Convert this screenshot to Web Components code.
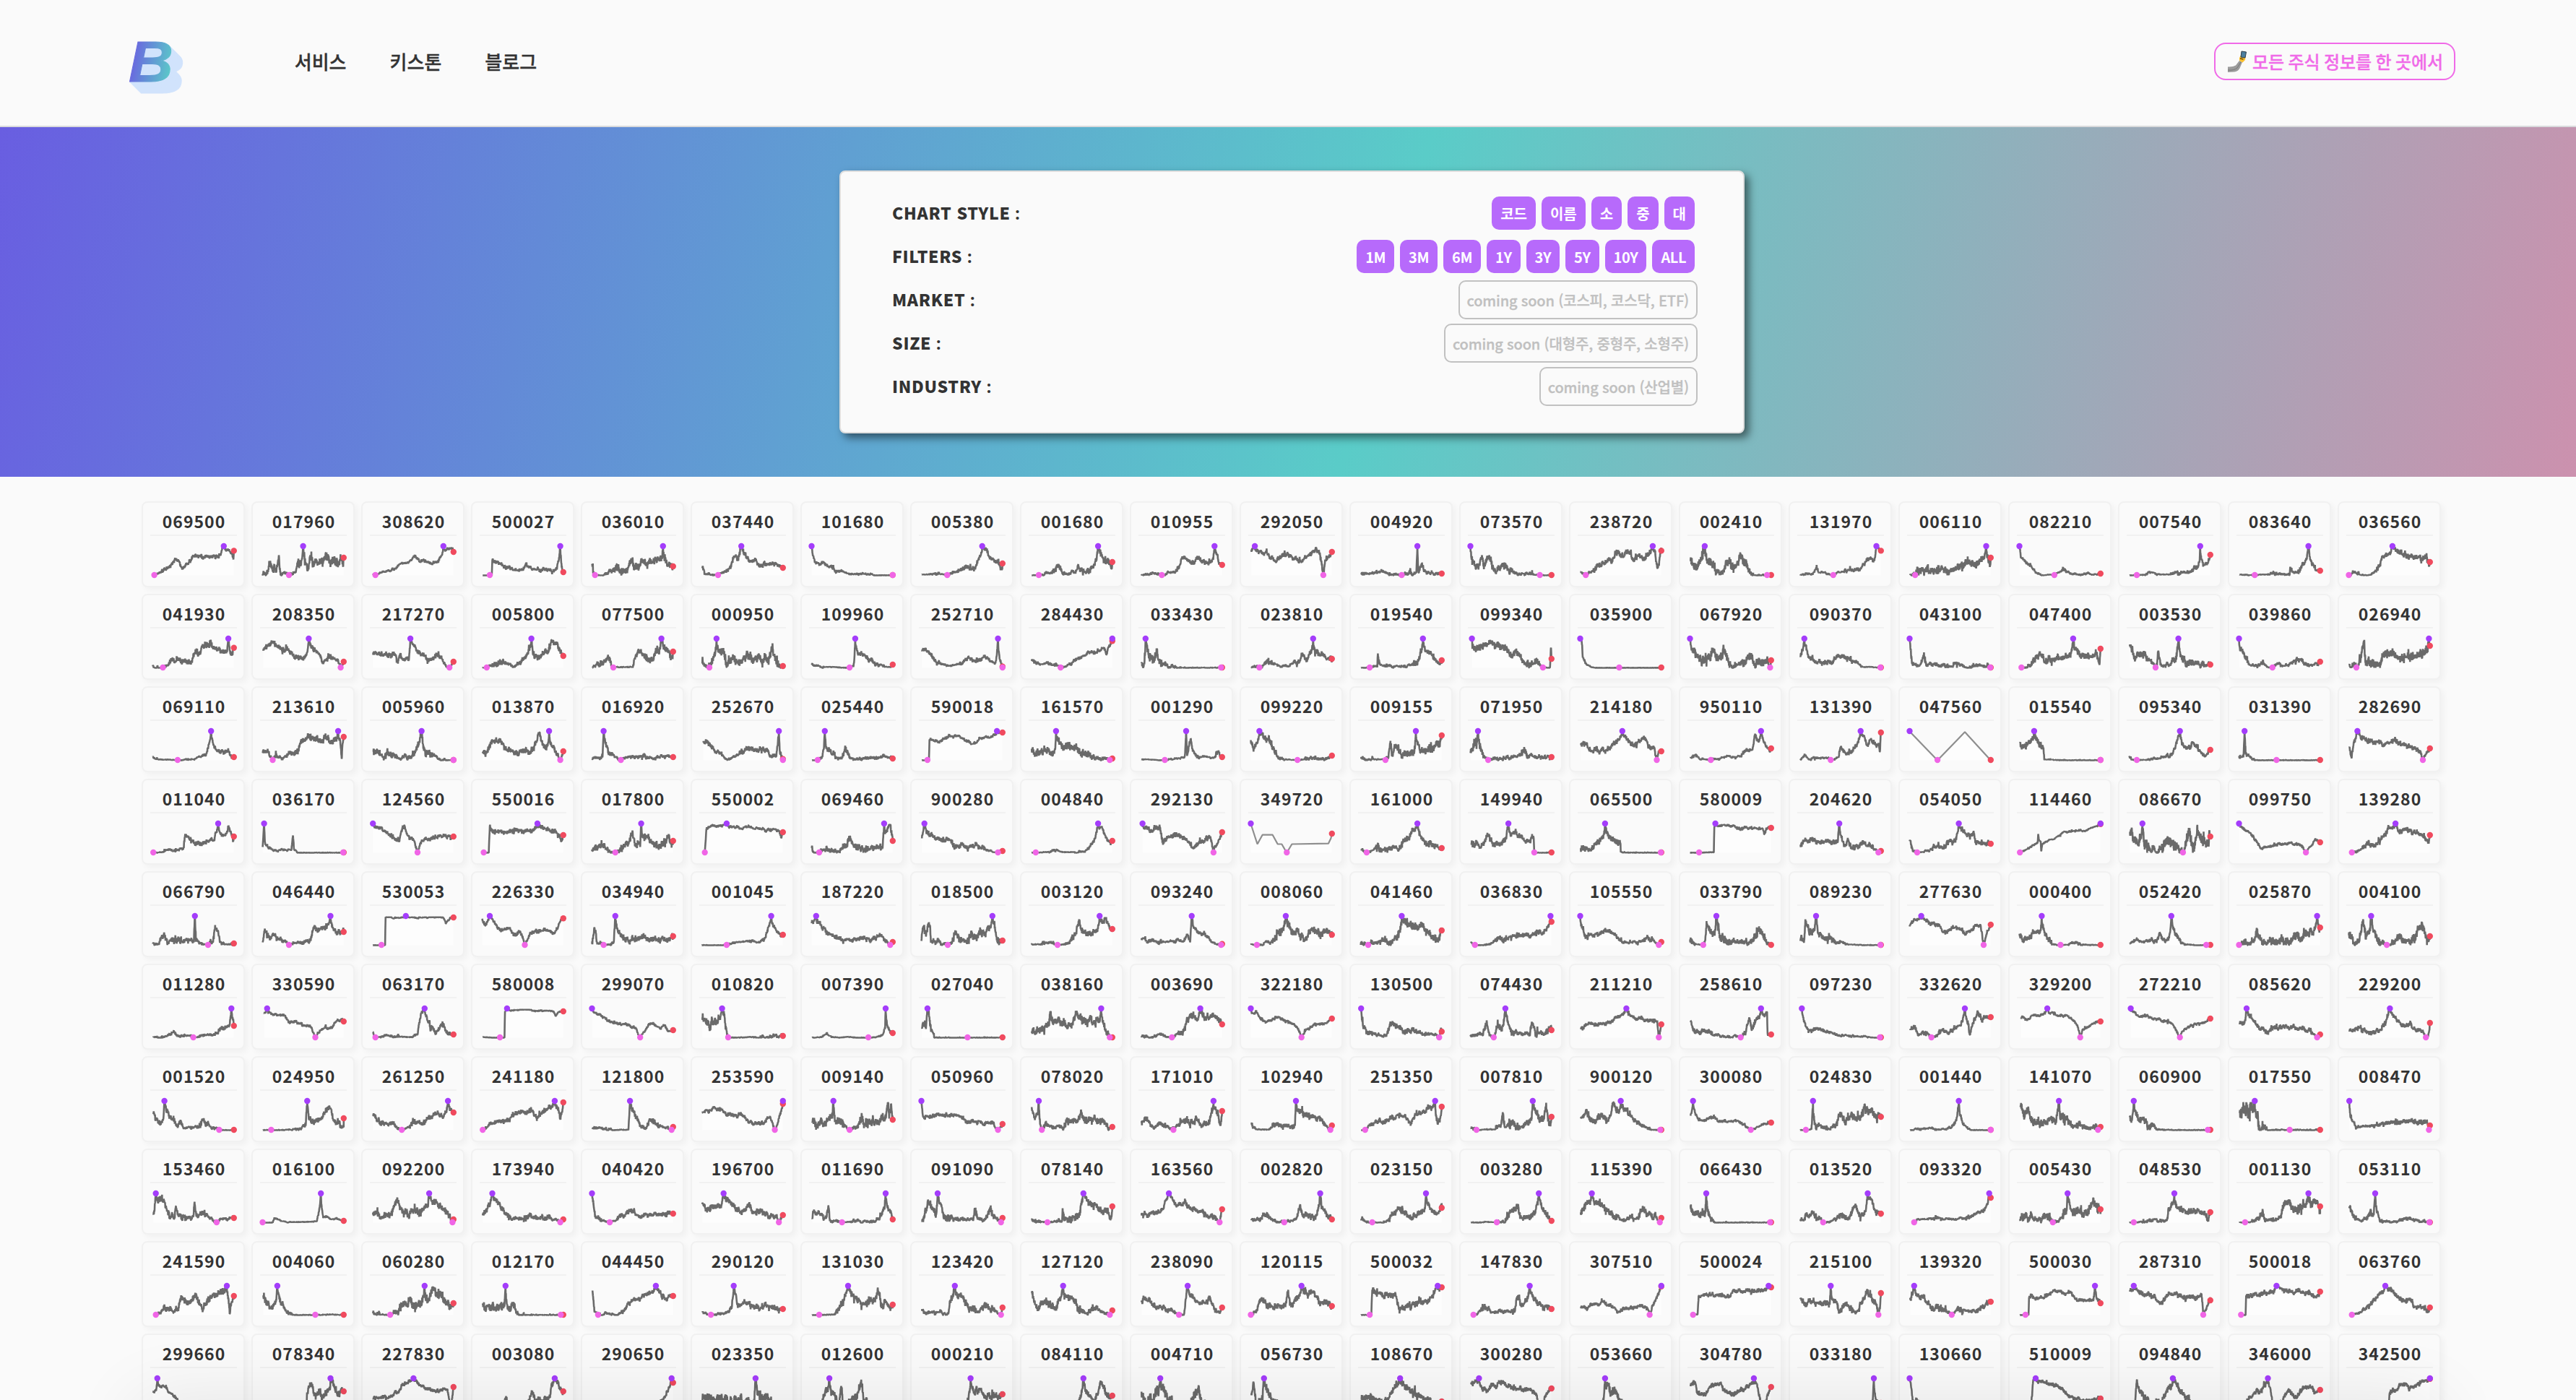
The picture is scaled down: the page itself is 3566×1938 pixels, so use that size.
<!DOCTYPE html>
<html lang="ko">
<head>
<meta charset="utf-8">
<title>Stocks</title>
<style>
html,body{margin:0;padding:0;background:#fafafa}
body{font-family:"Noto Sans CJK KR","Noto Sans",sans-serif;color:#333;height:1938px;overflow:hidden}
</style>
</head>
<body>
<stock-app></stock-app>
<script>
const define=(name,html,setup)=>customElements.define(name,class extends HTMLElement{
  connectedCallback(){
    if(this.shadowRoot)return;
    const t=document.createElement('template');
    t.innerHTML=html;
    this.attachShadow({mode:'open'}).appendChild(t.content.cloneNode(true));
    if(setup)setup.call(this,this.shadowRoot);
  }
});

/* code noise | high-x low-x last-height | x,height ... (x in 0..171, height in 0..100) */
const DATA=[`
069500 4|145 8 84|20,12 33,28 42,35 50,55 57,48 63,20 70,35 80,55 85,68 100,62 120,62 132,68 150,85 160,78 164,55
017960 9|85 57 60|5,5 15,20 18,50 24,20 32,10 37,70 40,15 50,8 70,10 78,35 83,55 88,50 95,20 99,70 105,40 115,45 125,55 140,45 155,40 162,55 164,30
308620 3|145 11 80|6,6 20,10 35,15 50,25 60,40 76,42 88,68 100,45 110,50 122,40 132,45 140,65 150,85 160,92
500027 4|159 20 10|6,0 24,0 25,52 35,45 45,32 60,22 75,18 87,22 92,40 97,25 110,20 145,18 152,22 157,60 163,15
036010 8|145 11 30|5,35 8,10 25,0 35,8 45,15 52,35 62,15 75,20 83,55 88,20 100,40 115,35 125,45 135,55 142,65 150,60 156,40
037440 5|83 37 25|6,30 12,5 30,3 45,5 55,15 62,25 68,60 72,70 75,50 80,70 88,70 100,50 115,40 130,32 142,35 150,42 158,28
101680 4|5 165 0|7,75 12,45 20,35 28,45 38,30 50,18 65,12 80,5 100,5 125,3 128,0
005380 5|125 56 40|6,3 20,3 35,6 45,4 62,8 75,12 85,20 95,28 105,20 112,30 118,60 124,80 132,95 140,55 150,52 160,40 164,22
001680 6|137 20 45|6,0 35,5 50,8 55,30 60,35 66,10 80,5 92,10 97,30 110,12 120,18 128,30 133,60 141,75 150,50 160,40 164,22
010955 5|150 46 35|6,0 15,5 35,5 55,5 70,12 80,25 86,60 100,50 110,40 116,65 125,50 138,35 147,60 155,75 160,40
292050 5|13 148 80|6,88 22,85 35,78 45,60 55,45 65,68 80,70 95,55 105,45 118,65 130,78 137,88 142,70 151,40 158,60
004920 6|117 86 5|6,8 15,5 28,10 48,10 60,3 75,5 100,5 103,25 107,5 115,10 119,10 127,35 130,12 140,8 155,5
073570 7|5 142 0|9,50 15,30 23,35 28,70 32,35 42,70 50,30 55,15 65,25 72,45 80,20 95,8 110,5 130,3
238720 6|148 16 84|6,12 30,15 40,35 50,40 60,50 70,60 76,85 85,65 98,80 110,60 120,70 130,60 140,75 152,85 157,25 160,40
002410 10|34 157 0|6,50 10,40 20,30 30,55 40,50 50,30 60,10 70,10 82,45 90,30 100,45 104,80 110,60 120,20 130,0
131970 4|156 71 84|6,3 20,5 30,5 39,25 45,10 60,5 80,10 90,12 100,20 112,20 125,25 135,50 145,62 150,45
006110 8|156 16 60|6,5 20,30 25,15 45,18 60,15 75,30 80,15 90,12 103,30 110,25 120,45 130,35 140,40 150,55 158,60 164,35
082210 4|5 74 5|8,60 20,45 30,25 40,10 50,0 65,3 80,8 93,20 105,5 120,3 140,6 155,4
007540 5|145 20 70|6,0 35,2 50,10 65,3 85,3 100,15 115,10 130,15 140,30 144,55 150,45 160,40 164,60
083640 5|142 36 15|6,3 50,3 60,3 80,6 105,3 106,30 110,10 120,12 128,25 135,45 139,60 145,60 150,45 157,20
036560 6|91 5 45|15,8 25,3 40,0 50,3 60,15 66,40 70,60 85,72 98,85 110,75 125,68 140,60 155,58 162,50`,`
041930 6|154 25 68|5,5 15,0 35,8 40,25 55,25 68,20 80,20 88,50 97,45 105,80 118,85 125,65 140,60 150,50 157,60 162,45
208350 5|96 159 20|6,62 15,75 24,88 35,70 48,58 53,68 60,50 70,42 85,35 92,50 99,75 110,60 120,40 126,20 135,35 148,30 158,15
217270 5|80 157 20|6,45 10,52 20,42 35,42 50,42 55,20 60,50 65,25 77,25 79,65 90,70 100,50 112,35 120,30 132,45 140,40 147,15
005800 6|102 14 40|6,0 20,10 35,18 45,22 55,12 70,8 80,15 90,30 98,60 105,45 115,45 125,50 135,50 141,88 150,80 160,60
077500 7|142 47 55|6,0 15,15 30,25 40,25 50,3 70,2 85,3 92,40 97,65 105,50 115,25 125,30 132,50 145,75 155,60 164,30
000950 9|34 20 5|6,15 10,5 26,25 32,60 40,65 48,50 53,15 60,35 72,15 85,25 95,45 105,20 115,35 125,30 136,20 142,60 150,30 158,15
109960 5|91 80 10|5,10 15,10 30,3 50,3 70,0 87,5 92,80 98,45 110,45 120,22 135,18 148,3 160,3
252710 4|156 165 3|6,60 12,65 25,40 35,20 45,15 55,5 70,10 85,15 98,40 110,25 122,22 130,45 140,20 150,15 160,30
284430 4|165 63 92|6,30 20,12 40,15 55,15 75,8 90,25 105,40 120,50 135,50 147,70 153,45 158,75
033430 9|14 163 0|6,20 10,5 17,80 22,30 28,15 36,50 42,20 52,8 60,4 75,0 150,0
023810 6|128 22 30|6,0 12,8 30,8 37,25 50,10 65,5 80,8 90,15 100,20 107,50 115,25 125,60 133,50 145,50 155,32
019540 5|128 23 25|6,0 30,5 38,5 39,50 42,12 60,5 75,5 95,5 105,12 118,20 124,60 135,60 145,45 155,20 160,12
099340 7|8 148 30|15,60 25,75 35,88 50,85 60,70 75,60 85,35 95,55 105,30 115,15 130,15 140,15 155,0 162,0 164,70
035900 3|5 82 0|8,90 10,35 15,15 25,3 35,0 100,0 150,0
067920 9|5 163 25|8,60 20,40 30,30 45,25 52,60 55,35 68,30 71,80 78,25 90,5 105,15 115,15 119,45 130,15 145,20 158,15
090370 5|14 164 0|6,40 11,60 18,60 22,40 35,20 55,20 70,25 82,45 90,35 100,35 115,15 130,3 145,3
043100 7|5 164 0|7,60 10,15 25,8 32,45 38,15 50,10 70,5 85,5 95,15 108,12 120,3 138,12 150,5
047400 7|111 9 65|20,5 35,20 45,50 55,25 70,30 80,30 95,38 105,45 120,45 135,45 145,40 152,40 156,50 160,30 163,10
003530 8|102 57 10|6,75 15,40 25,50 35,40 50,15 62,55 68,12 85,8 95,30 105,55 112,30 120,25 135,12 150,15
039860 6|5 71 20|10,60 16,35 24,10 40,5 50,20 60,3 80,10 95,8 110,12 122,30 135,10 150,10 160,15
026940 9|163 20 75|6,10 15,10 28,20 35,85 38,25 50,15 65,18 78,50 90,40 105,35 120,35 135,40 145,50 158,60`,`
069110 4|120 54 10|5,12 15,3 40,2 60,0 85,5 100,12 110,20 115,55 125,55 130,35 145,25 155,28 160,12
213610 6|154 25 80|5,25 15,40 30,15 45,8 60,20 75,35 80,60 90,80 100,80 110,80 118,65 130,75 140,60 150,75 158,70 161,5 163,60
005960 7|102 165 0|7,30 20,15 35,25 50,10 60,5 70,15 80,12 90,30 95,65 105,55 110,25 120,20 135,5 150,0
013870 6|137 159 30|6,30 12,25 22,60 30,65 45,55 60,35 75,25 90,25 105,35 112,60 117,90 125,50 133,45 141,60 150,30
016920 6|28 62 10|5,5 15,10 20,8 26,15 32,55 38,20 45,15 55,5 75,12 90,10 105,15 120,10 135,12 150,12
252670 5|157 165 3|8,62 15,65 25,40 40,20 50,8 60,5 75,15 92,40 110,35 125,40 140,20 152,12 155,60 159,30
025440 6|31 17 5|6,0 25,5 29,40 34,40 42,30 55,10 65,10 71,45 80,15 90,3 110,5 130,5 145,15 155,8
590018 3|154 17 95|6,0 20,5 21,72 45,68 60,80 72,87 85,78 95,62 108,55 120,75 140,78 150,85
161570 8|54 160 5|6,40 15,30 30,30 50,25 53,60 60,60 70,50 85,40 95,40 110,20 130,12 145,5
001290 4|94 52 10|6,3 20,3 40,0 65,5 90,8 96,15 103,75 107,30 115,15 130,12 150,8 157,30 161,12
099220 6|22 97 15|5,70 10,40 18,60 25,85 35,70 45,60 52,25 60,5 75,3 110,3 140,5 155,5
009155 8|114 54 85|6,5 30,3 50,3 60,10 63,60 68,15 75,55 85,20 100,20 110,30 118,65 122,35 140,40 150,40 155,65 160,50
071950 8|20 40 10|5,30 12,50 18,60 25,50 30,20 45,3 70,5 90,10 105,15 112,40 120,15 135,10 150,12
214180 5|88 156 30|6,60 15,55 25,35 45,32 60,40 75,60 85,80 95,75 110,50 125,65 133,80 140,45 150,40 160,28
950110 4|145 46 40|6,8 15,20 25,5 60,5 75,12 90,10 105,15 115,35 128,35 133,85 140,65 148,75 155,45 163,30
131390 5|125 66 95|6,0 14,15 25,3 40,10 60,5 75,5 82,15 85,45 95,25 110,30 118,55 130,85 138,50 145,70 155,50 160,60 163,30
047560 0|5 60 0|114,98
015540 7|34 165 0|6,60 10,45 20,50 27,60 33,75 45,60 52,40 54,3 65,3 80,0 140,0
095340 5|105 20 35|5,15 10,3 40,2 60,8 75,12 90,20 97,55 102,80 112,50 122,40 130,60 140,40 150,15 160,20
031390 5|16 79 0|5,15 12,12 14,20 18,20 25,12 35,0 60,0 120,0
282690 5|22 151 40|6,45 10,15 15,65 30,75 50,65 65,60 75,50 90,65 105,60 115,50 135,45 148,25 158,25`,`
011040 5|134 6 55|25,2 33,12 50,10 65,12 69,65 78,45 90,30 105,28 115,35 125,45 130,70 138,65 148,60 154,90 160,65 164,40
036170 4|8 164 0|5,20 10,35 20,15 35,5 50,10 62,10 65,60 67,10 75,0 140,0
124560 4|6 94 55|20,80 35,65 45,55 52,40 58,40 64,85 68,95 74,60 80,50 88,40 100,30 110,45 130,55 150,55
550016 5|114 8 60|18,0 20,90 25,70 40,75 55,68 75,82 90,70 105,75 118,92 130,85 150,70 158,55 162,40
017800 8|102 51 40|5,5 20,25 35,8 45,2 60,12 75,30 84,70 90,30 100,20 104,55 115,60 125,30 135,25 148,30 155,60 160,40
550002 3|54 11 70|14,80 25,92 40,93 60,88 80,85 100,88 120,82 145,80 158,75 162,50
069460 7|148 20 40|5,20 10,0 35,15 45,10 60,5 72,25 80,55 90,20 105,18 120,15 135,15 145,15 150,65 160,95 163,60
900280 5|11 156 5|6,50 8,70 14,80 22,60 35,50 45,42 60,45 68,25 85,25 100,18 115,25 130,15 145,3
004840 4|137 14 40|6,0 40,3 50,8 65,2 90,2 110,5 120,20 128,40 134,70 145,85 152,50 160,35
292130 5|8 148 70|15,88 25,75 33,80 42,85 48,35 58,52 75,65 90,50 100,40 106,18 120,40 135,48 142,55 150,20 158,45
349720 0|5 76 65|18,30 28,62 48,62 58,30 66,30 86,30 158,32 163,50
161000 6|117 17 15|6,10 25,5 40,20 50,12 60,20 70,15 80,10 88,40 100,50 108,75 120,75 128,50 135,25 150,30 160,10
149940 6|80 131 0|6,30 15,25 30,25 38,60 48,30 60,25 72,35 76,50 78,90 85,60 95,70 105,60 112,40 130,48 132,0 150,0
065500 7|54 164 0|6,15 15,15 25,8 35,30 42,45 50,60 57,65 65,45 75,35 84,35 85,2 110,0 140,0
580009 3|55 23 85|5,0 50,2 52,2 53,90 60,94 85,94 95,86 130,86 148,85 152,70 158,85
204620 5|83 160 5|6,25 15,42 35,38 60,38 80,38 85,60 92,20 100,45 108,15 120,20 132,40 140,25 150,15
054050 5|102 20 30|5,45 12,5 30,3 45,8 60,25 70,15 82,35 95,40 99,65 110,75 120,60 132,65 135,35 148,40 158,30
114460 2|165 6 98|20,12 35,28 41,35 42,65 44,40 47,40 48,5 50,30 60,42 75,50 90,68 110,75 135,75 150,88
086670 12|31 111 55|6,70 15,35 22,25 29,60 35,35 45,20 60,5 75,20 85,35 100,15 115,15 122,65 128,25 135,25 139,90 145,50 158,30
099750 3|5 137 35|15,80 30,65 40,40 48,15 60,20 75,25 90,28 105,32 118,35 130,25 145,20 155,42
139280 5|97 11 60|25,5 40,25 55,25 65,40 72,55 80,65 85,85 92,92 105,65 120,85 130,70 145,60 155,50 163,40`,`
066790 7|88 114 5|5,5 15,5 28,35 35,10 50,20 65,12 78,15 86,10 90,12 105,3 122,8 128,70 131,60 134,50 137,15 145,3 155,3
046440 6|139 57 45|5,10 10,50 18,25 35,22 50,12 70,10 90,12 100,15 107,60 120,55 132,65 143,60 152,45 158,35
530053 2|71 23 95|6,0 30,0 31,98 42,98 44,94 58,94 90,96 115,97 145,97 150,75 158,95
226330 4|20 89 92|5,92 8,75 15,80 28,80 42,45 55,62 68,35 78,50 85,30 100,40 120,45 135,50 148,45 158,80
034940 6|51 28 30|5,5 10,60 15,10 40,3 48,10 55,60 65,25 80,15 95,25 105,30 120,20 140,20 155,25
001045 4|142 54 35|5,0 25,0 45,0 65,8 85,12 100,15 120,10 130,25 137,65 147,65 155,45 163,30
187220 5|14 160 10|5,80 18,80 28,60 40,40 55,25 70,15 90,22 105,25 120,20 140,30 155,12
018500 8|145 57 15|5,15 8,60 14,30 20,80 24,10 40,10 65,5 73,50 80,20 95,5 103,50 115,35 130,40 140,60 148,80 155,20
003120 6|140 57 55|5,3 25,3 40,8 50,3 70,3 85,15 93,40 100,80 107,40 120,45 135,50 145,75 152,90 158,65
093240 4|105 163 3|6,25 20,15 40,15 60,12 75,15 90,12 95,35 102,12 108,65 118,40 130,40 142,15 152,5
008060 8|74 17 35|5,3 30,5 45,10 55,25 65,60 80,65 90,40 98,45 110,12 125,50 140,35 155,45
041460 8|86 20 50|5,5 35,10 50,15 65,15 80,25 90,75 105,60 120,60 127,75 135,50 148,25 160,15 164,45
036830 5|163 14 80|6,8 30,0 45,5 60,20 75,15 90,35 105,30 120,35 130,35 140,50 148,45 158,60
105550 5|5 160 10|10,55 15,30 25,35 42,35 55,55 65,45 80,25 95,10 110,12 125,12 138,25 150,15
033790 9|57 31 0|5,20 15,3 35,15 38,70 45,40 55,50 60,50 65,15 80,20 95,12 115,12 130,12 140,60 150,30 158,12
089230 7|37 164 0|6,20 14,20 16,90 24,35 34,50 40,55 50,30 65,20 80,10 100,3 130,0 150,0
277630 4|28 151 70|5,70 15,88 35,88 50,75 65,65 72,45 85,55 105,58 115,40 130,60 145,70 156,35 160,50
000400 6|49 86 0|5,40 12,20 25,30 35,45 45,45 54,50 60,25 70,3 100,2 105,8 130,2
052420 5|88 157 0|6,5 15,15 30,12 50,15 62,20 65,45 70,20 82,20 91,60 100,25 115,3 140,0
025870 9|159 5 60|20,5 35,20 40,60 45,20 60,10 75,20 90,18 105,18 118,35 130,20 135,45 150,35 163,60
004100 9|49 80 30|5,35 15,12 25,10 33,90 38,20 45,40 52,60 58,25 70,10 95,10 105,20 120,12 135,20 142,60 150,65 158,30`,`
011280 5|160 85 40|6,5 20,0 35,5 45,20 55,8 70,8 90,2 105,8 120,8 130,20 140,30 148,35 157,50 164,60
330590 3|14 109 55|8,85 25,82 50,75 58,50 70,55 85,42 100,38 115,20 130,35 140,30 150,55 158,60
063170 5|108 11 10|6,20 20,3 35,5 60,3 85,2 94,10 98,50 101,85 112,70 120,35 130,20 145,50 150,25 160,10
580008 2|54 40 90|6,2 30,0 49,0 50,92 65,95 95,98 105,93 145,92 150,75 155,88
299070 3|5 100 25|15,80 25,75 40,55 60,45 75,48 90,30 110,25 118,50 130,45 140,30 148,45 155,20
010820 8|45 57 5|6,70 12,60 20,35 25,60 35,50 42,75 49,75 54,25 70,0 100,2 120,0 145,5
007390 4|151 117 15|6,0 25,2 35,15 45,3 60,0 75,3 95,0 130,2 145,8 150,30 155,35 160,15
027040 8|17 96 0|6,35 10,50 14,30 20,75 24,20 30,0 80,0 130,0
038160 8|143 160 0|6,20 20,20 30,35 40,45 42,80 48,45 60,55 75,45 85,50 92,80 105,65 118,60 130,55 137,60 148,45 153,20
003690 6|122 66 45|6,5 25,3 40,10 55,3 75,10 90,25 97,60 105,80 115,60 128,70 140,70 150,75 158,60
322180 3|5 105 65|12,80 15,95 22,70 35,55 50,65 60,72 75,55 90,50 98,30 112,20 130,45 155,52
130500 6|6 160 20|10,40 20,20 35,10 55,5 65,40 70,50 80,35 90,20 110,20 125,12 140,10 155,12 164,30
074430 7|74 51 25|5,5 15,10 30,10 37,60 42,15 58,40 66,25 70,45 80,45 90,15 110,10 122,15 127,45 135,15 150,10 160,20
211210 4|96 160 45|6,30 20,45 35,45 50,50 65,50 75,70 85,80 105,75 120,65 135,65 150,60 157,60 162,15
258610 5|145 105 10|6,60 12,25 25,20 45,18 60,12 75,2 100,5 115,20 122,70 127,25 135,60 141,65 148,80 157,90 158,15
097230 4|9 163 0|14,60 20,30 30,25 45,35 55,20 75,10 100,5 140,3 150,0
332620 5|114 48 70|6,30 15,35 22,8 35,20 60,10 68,25 80,15 88,30 100,40 108,60 118,60 124,10 132,65 140,88 148,60 158,75
329200 3|60 125 55|8,70 20,62 35,78 50,82 65,88 80,78 100,75 112,60 120,35 130,25 145,45 155,50
272210 3|8 105 65|18,85 25,72 40,75 55,68 70,58 85,55 95,35 108,15 120,35 135,45 150,48
085620 5|20 159 10|6,50 15,50 24,80 32,60 42,35 60,20 75,40 90,35 110,35 130,30 145,20
229200 5|86 157 50|6,25 20,28 35,25 50,15 65,25 78,50 83,80 92,80 105,55 115,40 125,50 140,20 150,25 162,12`,`
001520 6|28 136 0|6,60 12,40 20,25 26,40 35,60 45,40 52,15 60,30 66,5 85,8 98,15 103,40 110,20 125,5
024950 6|93 22 40|6,0 40,0 60,2 80,5 90,15 96,40 108,25 120,40 128,60 134,80 142,50 152,20 160,15 165,10
261250 5|154 63 60|6,50 15,30 30,20 45,25 55,5 75,10 90,25 105,25 115,40 130,60 145,50 150,65 160,75
241180 5|148 6 95|20,18 35,30 50,30 65,45 75,60 90,55 102,70 112,42 122,60 135,75 155,80 159,40 163,65
121800 6|80 162 10|6,8 25,8 45,0 77,2 82,85 90,50 100,15 112,5 120,35 130,25 145,8 155,15
253590 4|165 149 90|6,60 20,72 40,72 55,55 75,50 83,55 90,40 105,25 125,25 140,45 145,25 153,15 160,55
009140 8|48 80 35|6,30 15,20 30,20 38,40 46,40 53,20 60,40 70,15 90,8 105,30 120,20 135,30 150,35 156,95 158,40 162,90
050960 4|5 156 20|8,50 20,45 40,55 60,48 80,48 95,25 110,28 125,22 145,25 152,10
078020 7|20 26 10|6,80 12,40 18,60 32,20 45,10 65,12 75,30 95,32 104,60 110,30 125,35 145,40 152,20 158,5
171010 6|148 69 65|6,25 18,35 30,5 42,30 60,5 80,20 95,30 110,30 113,50 122,15 140,20 144,60 155,65 162,15
102940 6|94 162 15|6,20 15,3 40,2 50,18 80,15 92,15 96,70 105,60 115,50 125,45 140,40 150,15
251350 5|152 14 80|6,0 25,18 45,30 60,35 78,50 92,50 104,20 115,50 130,65 145,80 157,20 162,40
007810 8|128 17 45|6,8 30,2 55,3 65,15 68,50 75,10 90,20 105,12 120,20 124,35 134,60 140,35 150,50 154,80 158,30 162,20
900120 6|85 163 0|6,40 18,70 25,30 40,35 50,50 60,30 65,50 70,90 80,65 92,70 105,50 115,30 130,12 145,2
300080 3|11 125 25|6,50 15,60 22,35 35,38 50,48 65,30 95,35 110,22 135,8 150,22
024830 8|31 17 45|6,0 28,2 35,20 50,8 65,3 78,30 86,60 92,30 105,45 120,35 130,50 133,90 140,60 148,75 155,40
001440 4|102 165 0|6,0 30,5 45,8 60,3 85,5 95,30 104,50 112,15 125,0 145,0
141070 9|83 160 10|7,85 15,50 22,60 30,30 50,25 65,45 75,35 85,50 93,40 100,35 110,10 125,15 140,5 155,12
060900 8|14 160 0|6,45 10,40 18,60 25,30 35,40 45,20 60,2 100,0 150,0
017550 14|36 105 0|6,60 15,70 25,70 35,75 42,60 45,5 60,0 100,0 150,0
008470 5|6 163 15|10,40 18,15 40,12 60,15 75,25 90,25 110,30 125,30 145,25 160,25`,`
153460 6|11 131 15|6,30 16,70 22,90 30,50 38,20 48,15 50,50 56,20 70,15 85,20 87,65 92,20 105,30 120,15 140,12 155,12
016100 3|120 5 5|25,0 28,15 45,4 60,2 100,3 112,5 118,60 125,20 140,12 155,10
092200 7|117 163 10|6,35 12,30 20,12 35,20 45,40 53,80 62,50 75,25 88,40 100,30 108,60 115,60 125,75 135,65 148,45 155,25
173940 6|25 159 10|6,25 15,50 28,75 38,65 50,30 65,12 85,15 100,20 115,12 130,18 145,12
040420 5|5 40 30|7,70 12,25 20,20 30,5 50,5 60,30 70,20 80,45 95,25 115,25 130,30 150,30
196700 6|48 157 25|6,70 15,50 30,55 43,50 45,75 55,75 65,55 80,40 90,40 97,65 105,40 120,40 140,25 150,25
011690 6|151 65 10|6,15 10,45 20,30 30,12 37,40 38,60 41,5 80,3 100,5 125,3 140,15 145,40 149,50 155,60
091090 7|37 162 15|6,5 14,40 18,80 24,50 33,35 42,65 50,30 60,15 80,12 100,8 108,20 111,40 115,15 130,8 140,40 150,15
078140 8|108 37 55|6,10 25,3 50,3 66,5 67,50 70,10 85,20 98,25 104,60 115,75 125,60 135,60 145,35 155,30 163,20
163560 5|60 160 45|6,25 20,30 40,35 50,50 56,85 65,85 75,55 90,70 105,45 120,35 140,20 155,15
002820 6|142 71 10|6,8 25,15 30,30 45,10 60,5 85,5 95,12 102,60 108,25 125,20 135,25 140,60 145,50 152,30
023150 6|134 28 50|6,12 20,0 50,0 65,20 72,30 80,50 92,25 105,15 120,25 130,40 138,60 150,35 160,40 165,65
003280 7|140 57 5|6,0 20,0 40,3 75,8 88,45 98,55 105,20 120,25 132,30 138,60 145,60 155,25
115390 7|28 162 15|6,35 15,65 25,75 32,75 45,60 55,45 70,20 85,10 105,15 120,12 128,50 140,30 155,15
066430 8|37 163 0|6,60 12,40 25,25 35,30 45,20 55,0 100,0 140,0
013520 6|139 51 30|6,5 20,20 30,35 45,12 70,8 90,30 100,8 115,60 122,20 132,30 137,65 145,80 152,50 160,30
093320 4|162 14 85|20,10 40,12 60,15 90,12 125,15 135,30 145,35 155,50
005430 9|100 71 45|6,12 20,20 35,10 50,15 60,30 75,5 90,15 98,40 105,60 115,30 120,55 130,25 145,45 155,65 165,30
048530 6|94 14 35|6,0 30,3 50,8 70,5 80,10 82,45 90,65 98,65 110,35 125,35 140,40 155,25 162,15
001130 8|142 17 55|6,0 30,3 45,15 51,30 60,8 80,10 88,15 92,60 103,80 112,40 125,50 135,60 150,65 160,75 165,30
053110 6|57 164 0|6,50 15,20 30,3 42,20 47,40 52,20 60,40 66,5 90,3 105,8 120,15 140,5`,`
241590 7|151 11 65|20,10 30,20 45,12 55,20 60,55 75,40 90,60 105,20 118,60 130,70 142,85 154,60 157,5 160,45
004060 7|34 109 0|6,65 15,40 25,20 32,50 40,45 50,15 60,10 65,0 100,0 140,2
060280 9|108 40 40|6,10 20,2 45,3 55,15 65,35 78,50 88,30 100,30 106,60 115,50 122,90 135,75 145,50 155,30 165,30
012170 9|51 160 0|6,35 18,30 30,25 42,30 49,30 55,20 65,30 72,5 90,0 140,0
044450 5|131 17 65|6,85 10,10 30,8 55,2 70,20 85,50 100,60 115,80 125,75 135,85 148,60 155,60
290120 5|68 23 20|6,10 15,2 40,5 55,8 62,30 70,85 76,25 90,45 105,30 120,20 130,40 145,22
131030 7|77 20 35|6,0 50,2 58,25 68,50 74,80 80,85 90,60 105,35 120,50 130,50 136,85 142,30 150,50 160,25
123420 7|71 162 25|6,15 15,8 40,8 58,3 61,50 68,70 76,65 85,60 95,40 105,20 120,10 130,45 140,20 152,12
127120 7|68 160 15|6,80 12,50 18,25 28,50 40,35 55,35 62,60 75,60 90,50 100,20 115,8 130,25 145,8
238090 5|97 80 25|6,45 12,60 25,40 45,25 65,15 90,5 94,60 105,65 115,50 130,45 140,60 150,25 160,10
120115 7|105 5 30|15,15 22,50 32,50 36,25 50,25 65,22 75,40 78,80 82,35 95,50 102,75 115,75 128,80 140,50 155,40
500032 6|157 23 95|6,0 26,2 28,85 45,70 60,70 75,65 81,20 95,30 110,40 125,40 140,50 150,75 160,90
147830 6|122 11 20|20,5 32,25 45,10 60,12 75,12 93,15 96,60 105,40 115,45 120,70 128,60 138,40 150,25
307510 4|165 142 98|6,25 20,25 35,40 50,45 65,35 80,12 95,25 110,30 125,30 138,25 148,30 155,60
500024 4|160 11 95|20,3 22,65 40,70 60,68 85,65 90,85 105,80 120,85 140,85 152,88
215100 6|66 160 75|6,60 15,45 40,40 62,40 68,55 78,40 82,5 95,40 115,3 128,40 137,80 145,60 157,30 163,20
139320 6|14 88 45|6,60 20,65 32,65 40,35 50,25 70,20 85,8 100,20 115,12 135,10 150,30
500030 4|154 17 40|6,0 23,0 24,60 45,60 60,65 75,85 95,75 105,80 120,50 135,50 150,55 157,60
287310 5|14 151 50|6,85 25,85 40,70 55,65 65,40 80,70 100,70 115,60 135,65 148,60 156,15 162,40
500018 5|79 9 80|18,0 19,65 40,68 60,80 72,85 85,95 100,80 120,80 145,78 158,65
063760 5|77 11 25|25,5 38,20 50,40 60,60 72,75 85,85 95,80 105,50 118,40 125,55 135,30 150,25 163,12`,`
299660 3|14 170 -70|5,55 8,50 12,65 16,80 30,70 45,40 60,20 70,0 95,-20 130,-35
078340 8|139 20 55|60,-45 70,-30 80,-20 90,-20 93,50 101,85 108,45 118,65 128,40 138,60 146,80 153,40 162,50
227830 4|86 166 70|6,30 20,35 40,40 55,55 65,75 80,90 95,85 110,65 125,55 140,60 153,65 160,-5
003080 6|148 20 55|40,-35 52,40 60,-20 80,-10 95,10 103,55 112,25 125,20 138,45 142,85 154,85 162,50
290650 4|162 20 85|80,-40 110,-30 125,-10 140,20 150,40 157,70
023350 12|111 160 -30|6,20 15,30 30,15 45,25 60,10 72,40 85,10 100,20 108,30 114,60 125,30 140,15 155,10
012600 9|40 160 -30|10,5 25,10 34,50 44,60 52,25 60,10 63,70 68,0 80,20 94,30 102,90 108,30 118,10 140,-5
000210 7|102 20 45|50,-35 80,-10 95,20 100,50 110,45 120,60 130,35 145,40 158,45
084110 6|108 20 40|60,-35 90,-10 100,20 106,65 115,60 130,20 138,60 142,85 150,55 158,30
004710 11|43 150 -30|6,55 15,15 28,20 36,60 48,60 60,20 70,10 90,0 105,20 118,60 125,15 140,5 155,-5
056730 9|31 150 -30|6,50 10,90 15,20 28,20 35,60 45,30 60,10 80,5 100,-20
108670 7|83 160 20|6,30 20,35 35,20 55,20 65,50 75,80 90,80 105,60 120,40 140,20 155,-5
300280 5|22 150 65|6,80 15,90 30,65 45,68 60,85 75,80 90,60 105,60 130,55 145,-2 155,50
053660 9|54 150 -30|25,-30 40,0 50,20 57,85 65,45 75,50 85,20 100,5 140,-30
304780 5|131 151 70|6,80 15,90 20,50 35,50 50,75 65,80 80,55 95,45 110,60 125,80 137,80 148,-5 155,25
033180 5|151 20 15|20,-30 100,-30 140,-10 148,10 155,30 160,20
130660 6|5 150 -30|8,70 12,20 25,15 50,0 100,-10 140,-20
510009 4|37 20 30|25,-20 30,40 32,92 50,88 65,80 80,75 95,50 110,35 125,25 150,25
094840 7|91 40 10|15,-20 20,95 26,50 35,30 50,15 70,20 80,60 88,75 100,70 112,50 125,20 140,10
346000 5|62 80 60|12,-5 25,30 38,50 48,55 58,85 66,70 72,5 85,10 105,60 115,30 130,60 145,80 155,50
342500 5|165 20 98|60,-30 83,-5 86,50 100,60 110,80 125,65 140,80 155,90`].map(r=>r.trim().split('\n'));

/* Builds the sparkline of one record, with repeatable jitter seeded by its code. */
function spark(line){
  const [head,marks,rest]=line.split('|');
  const [code,amp]=head.split(' ');
  const [hx,lx,last]=marks.split(' ').map(Number);
  const pts=rest.split(' ').map(p=>p.split(',').map(Number));
  const showLow=!pts.some(p=>p[1]<0);
  pts.push([hx,100],[165,last]);
  if(showLow)pts.push([lx,0]);
  pts.sort((a,b)=>a[0]-b[0]);
  let seed=Math.imul(+code,2654435761)|0||7;
  const rnd=()=>{seed^=seed<<13;seed^=seed>>>17;seed^=seed<<5;return (seed>>>0)/4294967296};
  const X=x=>x/171*120, Y=v=>4.5+(100-v)*.4;
  const out=[];
  const n=+amp;
  let drift=0;
  if(!n){for(const p of pts)out.push([X(p[0]),Y(p[1])]);}
  else for(let i=0;i<pts.length-1;i++){
    const [x0,y0]=pts[i],[x1,y1]=pts[i+1];
    out.push([X(x0),Y(y0)]);
    /* approaches to the peak stay low until close to it, so it reads as a spike */
    const bend=y1===100&&x1===hx&&x1-x0>3?2:y0===100&&x0===hx&&x1-x0>3?.5:1;
    const steps=Math.max(1,Math.round((x1-x0)*2.4));
    for(let s=1;s<steps;s++){
      const k=s/steps,base=y0+(y1-y0)*Math.pow(k,bend);
      const flat=y0<=3&&y1<=3;
      const a=n*(flat?.25:base<14?.7:1.25);
      const burst=rnd()>.95?2.1:1;
      drift=drift*.86+(rnd()-.5)*a*1.1;
      let v=Math.min(97,base+(flat?0:drift)+(rnd()-.45)*a*2*burst);
      if(showLow)v=Math.max(0,v);
      out.push([X(x0+(x1-x0)*k),Y(v)]);
    }
    if(i===pts.length-2)out.push([X(x1),Y(y1)]);
  }
  const d=out.map(p=>p[0].toFixed(1)+' '+p[1].toFixed(1)).join('L');
  const dot=(x,v,c)=>`<circle cx="${X(x).toFixed(1)}" cy="${(4+(100-v)*.4).toFixed(1)}" r="4.2" fill="${c}"/>`;
  return `<svg width="120" height="48" viewBox="0 0 120 48"><path d="M${d}L115.8 44.5L${out[0][0].toFixed(1)} 44.5Z" fill="#fff" opacity=".5"/><path d="M${d}" fill="none" stroke="#6a6a6a" stroke-width="${n?2.6:2.2}" stroke-linejoin="bevel" opacity="${n?1:.75}"/>${dot(165,last,'#f04a5e')}${dot(hx,100,'#a43dfb')}${showLow?dot(lx,0,'#f065e6'):''}</svg>`;
}

define('brand-logo',`<style>
:host{display:block;filter:drop-shadow(1px 1px 0 #d1e3fc) drop-shadow(1px 1px 0 #d1e3fc) drop-shadow(2px 2px 0 #d1e3fc) drop-shadow(4px 4px 0 #d1e3fc) drop-shadow(8px 8px 0 #d1e3fc)}
span{display:block;font:italic 700 80px/80px "Liberation Sans",Arial,sans-serif;padding:0 6px 0 0;background:linear-gradient(100deg,#6b5be2 6%,#5accc8 84%);-webkit-background-clip:text;background-clip:text;color:transparent;-webkit-text-stroke:1px transparent;transform:scaleX(1.07);transform-origin:0 0}
</style><span>B</span>`);

define('nav-link',`<style>:host{display:block;font-size:26px;line-height:38px;font-weight:500;-webkit-text-stroke:.35px #333;color:#333}</style><slot></slot>`);

define('promo-badge',`<style>
:host{display:flex;align-items:center;box-sizing:border-box;width:334px;height:52px;border:2px solid #f06ae8;border-radius:16px;padding-left:16px;font-size:24px;font-weight:500;word-spacing:-1.4px;-webkit-text-stroke:.3px #f06ae8;color:#f06ae8;white-space:nowrap}
svg{display:block;margin-right:8px;flex:none}
slot{display:block;margin-top:-2px}
</style>
<svg width="27" height="30" viewBox="0 0 27 30">
<path d="M1 22.5Q8 23 12 20.5L17 14L21 16L17.5 24.5Q15 29 10 29.5L1 30Z" fill="#9b9b9b"/>
<path d="M1 27Q9 28 14 24L19 16" fill="none" stroke="#777" stroke-width="1"/>
<path d="M17 10L19 6.5L25.5 8.5L25 13L21.5 16.5L17 14Z" fill="#fcc12f"/>
<path d="M20 1L26.5 2L25 10L19 9Z" fill="#4c7f9f" stroke="#2f3f4b" stroke-width="1"/>
<path d="M18 11L22.5 12" stroke="#6b4a08" stroke-width="1.6"/>
</svg><slot></slot>`);

define('app-header',`<style>
:host{display:flex;box-sizing:border-box;height:176px;border-bottom:2px solid #d9dadc;padding:0 167px 0 178px;background:#fafafa}
brand-logo{margin-top:46px;height:80px}
nav{display:flex;gap:60px;margin:66px auto 0 166px}
promo-badge{margin-top:59px}
</style>
<brand-logo></brand-logo>
<nav><nav-link>서비스</nav-link><nav-link>키스톤</nav-link><nav-link>블로그</nav-link></nav>
<promo-badge>모든 주식 정보를 한 곳에서</promo-badge>`);

define('tag-chip',`<style>
:host{display:flex;align-items:center;height:46px;padding:0 12px;border-radius:10px;background:#b76afb;color:#fff;font-size:20px;font-weight:700;white-space:nowrap}
:host([latin]){letter-spacing:-.45px}
</style><slot></slot>`);

define('soon-chip',`<style>
:host{display:flex;align-items:center;box-sizing:border-box;height:54px;padding:0 10px;margin-right:-4px;border:2px solid #c1c1c1;border-radius:10px;color:#c0c0c0;font-size:20px;font-weight:500;letter-spacing:-.17px;-webkit-text-stroke:.3px #c0c0c0;white-space:nowrap}
</style><slot></slot>`);

define('filter-row',`<style>
:host{display:flex;align-items:center;justify-content:space-between;height:60px}
.l{font-size:23px;font-weight:700;letter-spacing:.7px;color:#333;white-space:pre;padding-bottom:2px}
i{font-family:"Noto Sans",sans-serif;font-style:normal}
.r{display:flex;gap:8px}
</style><span class="l"><b></b><i> :</i></span><div class="r"><slot></slot></div>`,function(r){r.querySelector('b').textContent=this.getAttribute('label')});

define('filter-panel',`<style>
:host{display:block;box-sizing:border-box;width:1253px;height:364px;padding:27px 67px 0 71px;border:2px solid #dedede;border-radius:8px;background:#fafafa;box-shadow:6px 6px 12px rgba(0,0,0,.5)}
</style>
<filter-row label="CHART STYLE"><tag-chip>코드</tag-chip><tag-chip>이름</tag-chip><tag-chip>소</tag-chip><tag-chip>중</tag-chip><tag-chip>대</tag-chip></filter-row>
<filter-row label="FILTERS"><tag-chip latin>1M</tag-chip><tag-chip latin>3M</tag-chip><tag-chip latin>6M</tag-chip><tag-chip latin>1Y</tag-chip><tag-chip latin>3Y</tag-chip><tag-chip latin>5Y</tag-chip><tag-chip latin>10Y</tag-chip><tag-chip latin>ALL</tag-chip></filter-row>
<filter-row label="MARKET"><soon-chip>coming soon (코스피, 코스닥, ETF)</soon-chip></filter-row>
<filter-row label="SIZE"><soon-chip>coming soon (대형주, 중형주, 소형주)</soon-chip></filter-row>
<filter-row label="INDUSTRY"><soon-chip>coming soon (산업별)</soon-chip></filter-row>`);

define('hero-band',`<style>
:host{display:flex;justify-content:center;box-sizing:border-box;height:484px;padding:60px 0 0 11px;background:linear-gradient(105deg,#695ee1 0%,#5accc8 53.7%,#cc91ae 100%)}
</style><slot></slot>`);

define('stock-card',`<style>
:host{display:flex;flex-direction:column;align-items:center;box-sizing:border-box;width:143px;height:119px;border:2px solid #f1f1f1;border-radius:8px;padding-left:1px;background:#fafafa;box-shadow:4px 4px 8px rgba(0,0,0,.04)}
.c{height:46px;box-sizing:border-box;padding:10px 0 0 1px;width:120px;border-bottom:2px solid #f1f1f1;text-align:center;font-size:23px;line-height:30px;font-weight:700;letter-spacing:1px;color:#333}
svg{display:block;margin-top:10px;overflow:visible}
</style><div class="c"></div>`,function(r){
  const rec=this.getAttribute('record');
  r.querySelector('.c').textContent=rec.slice(0,6);
  r.querySelector('.c').insertAdjacentHTML('afterend',spark(rec));
});

define('stock-grid',`<style>
:host{display:grid;grid-template-columns:repeat(21,143px);gap:9px;padding:34px 0 0 196px}
</style>`,function(r){
  for(const row of DATA)for(const rec of row){
    const c=document.createElement('stock-card');
    c.setAttribute('record',rec);
    r.appendChild(c);
  }
});

define('bottom-shade',`<style>
:host{position:absolute;left:190px;right:190px;top:1938px;height:200px;box-shadow:0 0 100px rgba(0,0,0,.09);pointer-events:none}
</style>`);

define('stock-app',`<style>:host{display:block;position:relative;height:1938px;overflow:hidden}</style>
<app-header></app-header>
<hero-band><filter-panel></filter-panel></hero-band>
<stock-grid></stock-grid>
<bottom-shade></bottom-shade>`);
</script>
</body>
</html>
